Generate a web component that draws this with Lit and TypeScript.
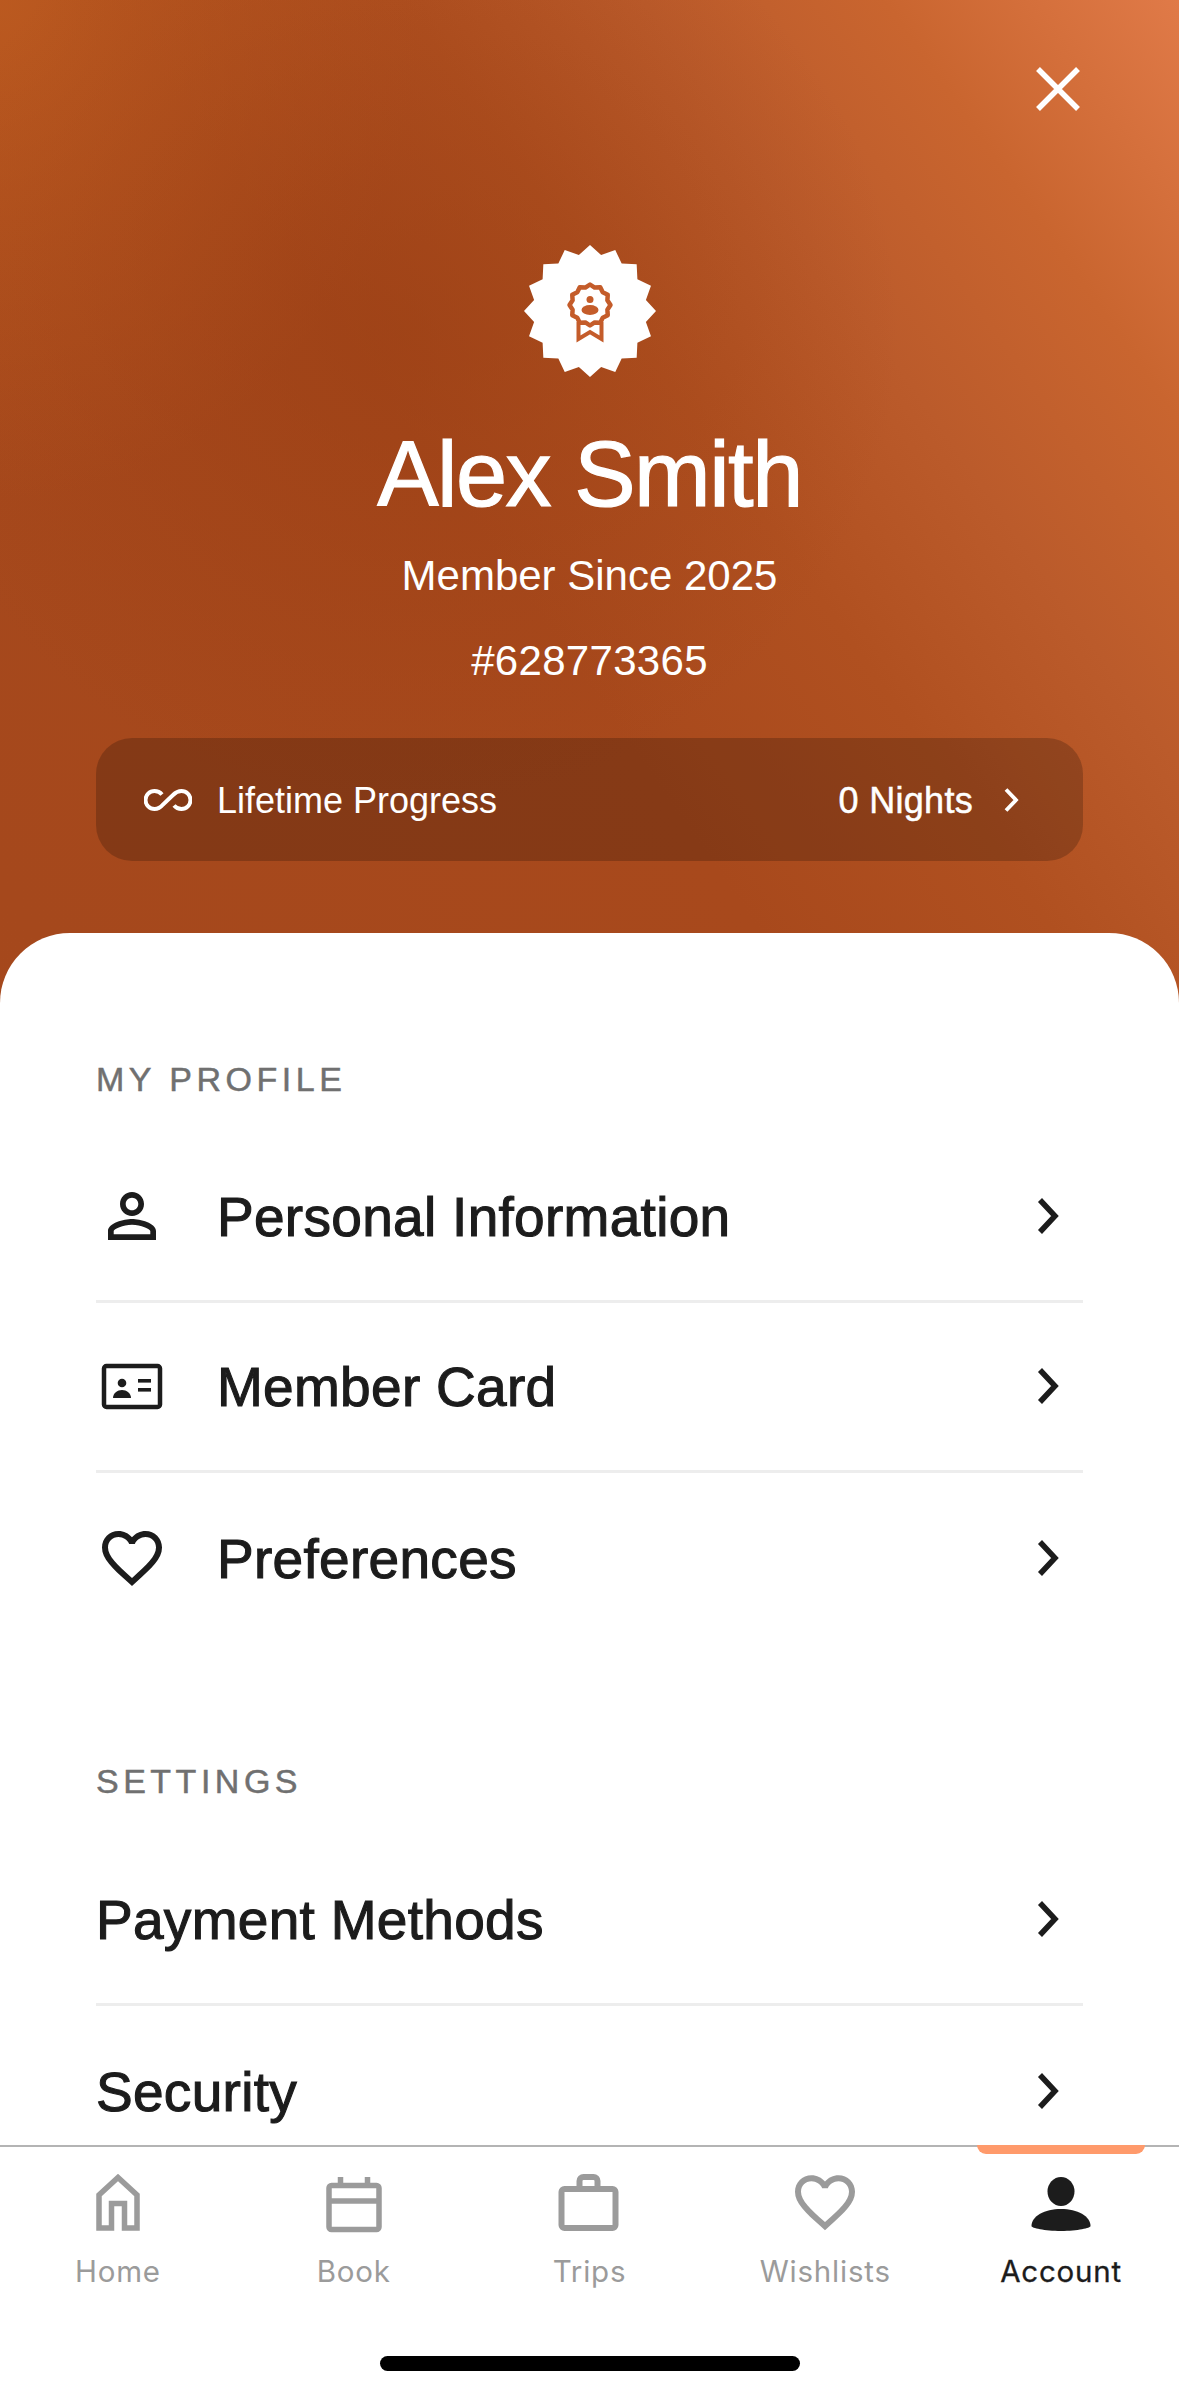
import { LitElement, html, css, svg } from 'lit';
import { customElement } from 'lit/decorators.js';

const starPoints = (cx: number, cy: number, outer: number, inner: number, n: number) => {
  const pts: string[] = [];
  for (let i = 0; i < n * 2; i++) {
    const r = i % 2 === 0 ? outer : inner;
    const a = (Math.PI * i) / n - Math.PI / 2;
    pts.push(`${(cx + r * Math.cos(a)).toFixed(2)},${(cy + r * Math.sin(a)).toFixed(2)}`);
  }
  return pts.join(' ');
};

const chevron = svg`<path d="M3 3l15 16L3 35" fill="none" stroke="currentColor" stroke-width="5.5"/>`;

const personOutline = svg`<path fill="currentColor" d="M12 5.9c1.16 0 2.1.94 2.1 2.1s-.94 2.1-2.1 2.1S9.9 9.16 9.9 8s.94-2.1 2.1-2.1m0 9c2.97 0 6.1 1.46 6.1 2.1v1.1H5.9V17c0-.64 3.13-2.1 6.1-2.1M12 4C9.79 4 8 5.79 8 8s1.79 4 4 4 4-1.79 4-4-1.79-4-4-4zm0 9c-2.67 0-8 1.34-8 4v3h16v-3c0-2.66-5.33-4-8-4z"/>`;

const heartOutline = svg`<path fill="currentColor" d="M16.5 3c-1.74 0-3.41.81-4.5 2.09C10.91 3.81 9.24 3 7.5 3 4.42 3 2 5.42 2 8.5c0 3.78 3.4 6.86 8.55 11.54L12 21.35l1.45-1.32C18.6 15.36 22 12.28 22 8.5 22 5.42 19.58 3 16.5 3zm-4.4 15.55l-.1.1-.1-.1C7.14 14.24 4 11.39 4 8.5 4 6.5 5.5 5 7.5 5c1.54 0 3.04.99 3.57 2.36h1.87C13.46 5.99 14.96 5 16.5 5c2 0 3.5 1.5 3.5 3.5 0 2.89-3.14 5.74-7.9 10.05z"/>`;

const cardIcon = svg`
  <rect x="8" y="16" width="56" height="41" rx="2.5" fill="none" stroke="currentColor" stroke-width="4.5"/>
  <circle cx="26" cy="33" r="4.3" fill="currentColor"/>
  <path d="M17 48c0-5 4.5-8 9-8s9 3 9 8z" fill="currentColor"/>
  <rect x="42" y="29" width="13" height="3.6" fill="currentColor"/>
  <rect x="42" y="38" width="13" height="3.6" fill="currentColor"/>`;

const homeIcon = svg`<path d="M26.5 54V29.5H39.5V54H52V21L33 3.500 14 21V54z" fill="none" stroke="currentColor" stroke-width="5.500"/>`;

const calendarIcon = svg`
  <rect x="8" y="11.500" width="50" height="44" rx="2.500" fill="none" stroke="currentColor" stroke-width="5.500"/>
  <path d="M8 27H58" stroke="currentColor" stroke-width="5.500"/>
  <path d="M19.500 3V12M46.500 3V12" stroke="currentColor" stroke-width="5.500"/>`;

const briefcaseIcon = svg`
  <rect x="5.500" y="15" width="54" height="39" rx="3" fill="none" stroke="currentColor" stroke-width="6"/>
  <path d="M23.500 15V7a4 4 0 0 1 4-4h10a4 4 0 0 1 4 4v8" fill="none" stroke="currentColor" stroke-width="6"/>`;

const personFilled = svg`
  <ellipse cx="33" cy="17.500" rx="13.500" ry="14.500" fill="currentColor"/>
  <path d="M3.500 52c0-10 13-17 29.500-17s29.500 7 29.500 17c0 2-13 5-29.500 5S3.500 54 3.500 52z" fill="currentColor"/>`;

interface Row {
  label: string;
  icon?: unknown;
  viewBox?: string;
}

const profileRows: Row[] = [
  { label: 'Personal Information', icon: personOutline, viewBox: '0 0 24 24' },
  { label: 'Member Card', icon: cardIcon, viewBox: '0 0 72 72' },
  { label: 'Preferences', icon: heartOutline, viewBox: '0 0 24 24' },
];

const settingsRows: Row[] = [{ label: 'Payment Methods' }, { label: 'Security' }];

const tabs = [
  { label: 'Home', icon: homeIcon },
  { label: 'Book', icon: calendarIcon },
  { label: 'Trips', icon: briefcaseIcon },
  { label: 'Wishlists', icon: heartOutline, viewBox: '1 2.6 22 20' },
  { label: 'Account', icon: personFilled, active: true },
];

@customElement('app-root')
export class AppRoot extends LitElement {
  static styles = css`
    :host {
      display: flex;
      flex-direction: column;
      width: 1179px;
      height: 2396px;
      overflow: hidden;
      background: #fff;
      font-family: 'Liberation Sans', Arial, sans-serif;
      color: #1c1c1c;
    }

    .main {
      flex: 1;
      min-height: 0;
      overflow: hidden;
      display: flex;
      flex-direction: column;
      background:
        radial-gradient(ellipse 500px 480px at 400px 330px, rgba(150, 60, 18, 0.5), rgba(150, 60, 18, 0) 100%),
        radial-gradient(ellipse 420px 500px at 0 0, rgba(190, 92, 32, 0.85), rgba(190, 92, 32, 0) 100%),
        linear-gradient(235deg, #e07a48 0%, #c9652f 11%, #bb5b2b 20%, #b05020 29%, #a8491c 40%, #a5481c 67%, #a9491d 100%);
    }

    .hero {
      display: flex;
      flex-direction: column;
      align-items: center;
      color: #fff;
      padding: 0 96px;
    }

    .close-row {
      align-self: stretch;
      display: flex;
      justify-content: flex-end;
      padding: 66px 0 0;
      margin-right: 2px;
      height: 46px;
    }

    .close {
      width: 46px;
      height: 46px;
    }

    .badge {
      display: block;
      width: 134px;
      height: 134px;
      margin-top: 132px;
    }

    .name {
      font-size: 92px;
      line-height: 100px;
      margin-top: 46px;
      -webkit-text-stroke: 1.2px #fff;
      letter-spacing: -1.5px;
    }

    .since,
    .number {
      font-size: 42px;
      line-height: 44px;
    }

    .since {
      margin-top: 30px;
    }

    .number {
      margin-top: 41px;
      letter-spacing: 0.3px;
    }

    .progress {
      align-self: stretch;
      display: flex;
      align-items: center;
      height: 123px;
      margin-top: 55px;
      padding: 0 48px;
      border-radius: 36px;
      background: rgba(0, 0, 0, 0.2);
      font-size: 36px;
    }

    .progress span {
      padding-top: 3px;
    }

    .progress .inf {
      width: 48px;
      height: 24px;
      margin-right: 25px;
    }

    .progress .nights {
      margin-left: auto;
      letter-spacing: 0.3px;
      -webkit-text-stroke: 0.5px #fff;
    }

    .progress .chev {
      width: 16px;
      height: 26px;
      margin-left: 30px;
      margin-right: 16px;
    }

    .sheet {
      flex: 1;
      margin-top: 72px;
      padding: 124px 96px 0;
      background: #fff;
      border-radius: 70px 70px 0 0;
    }

    .section {
      font-size: 34px;
      line-height: 44px;
      letter-spacing: 4.5px;
      color: #707070;
      -webkit-text-stroke: 0.5px #707070;
    }

    .list {
      margin-top: 31px;
    }

    .list.settings {
      margin-top: 33px;
    }

    .list + .section {
      margin-top: 115px;
    }

    .row {
      display: flex;
      align-items: center;
      height: 170.5px;
      box-sizing: border-box;
      border-bottom: 3px solid #ededed;
      font-size: 55px;
      letter-spacing: 0.3px;
      -webkit-text-stroke: 1.1px #1c1c1c;
    }

    .row span {
      padding-top: 2px;
    }

    .row:last-child {
      border-bottom: none;
    }

    .row .icon {
      width: 72px;
      height: 72px;
      margin-right: 49px;
    }

    .row .chev {
      width: 22px;
      height: 38px;
      margin-left: auto;
      margin-right: 24px;
    }

    .tabbar {
      position: relative;
      flex: none;
      height: 251px;
      box-sizing: border-box;
      border-top: 2px solid #b4b4b4;
      background: #fff;
      display: flex;
      flex-direction: column;
      align-items: center;
    }

    .tabs {
      align-self: stretch;
      display: grid;
      grid-template-columns: repeat(5, 1fr);
      padding-top: 27px;
    }

    .tab {
      position: relative;
      display: flex;
      flex-direction: column;
      align-items: center;
      color: #9b9b9b;
      font-family: Inter, sans-serif;
      font-size: 29.5px;
      line-height: 36px;
      letter-spacing: 0.8px;
    }

    .tab svg {
      width: 66px;
      height: 60px;
      margin-bottom: 19px;
    }

    .tab.active {
      color: #1c1c1c;
      -webkit-text-stroke: 0.3px #1c1c1c;
    }

    .tab.active::before {
      content: '';
      position: absolute;
      top: -29px;
      left: 34px;
      right: 34px;
      height: 9px;
      background: #ff9a6b;
      border-radius: 0 0 9px 9px;
    }

    .indicator {
      width: 420px;
      height: 15px;
      margin-top: auto;
      margin-bottom: 25px;
      border-radius: 8px;
      background: #000;
    }
  `;

  private renderRow(row: Row) {
    return html`
      <div class="row">
        ${row.icon ? html`<svg class="icon" viewBox=${row.viewBox ?? '0 0 24 24'}>${row.icon}</svg>` : ''}
        <span>${row.label}</span>
        <svg class="chev" viewBox="0 0 22 38">${chevron}</svg>
      </div>
    `;
  }

  render() {
    return html`
      <div class="main">
        <div class="hero">
          <div class="close-row">
            <svg class="close" viewBox="0 0 46 46">
              <path d="M3 3L43 43M43 3L3 43" stroke="#fff" stroke-width="5.500" fill="none" />
            </svg>
          </div>
          <svg class="badge" viewBox="0 0 134 134">
            <polygon points=${starPoints(67, 67, 66, 57, 16)} fill="#fff" />
            <polygon
              points=${starPoints(67, 61, 20.5, 18, 12)}
              fill="none"
              stroke="#c45c2a"
              stroke-width="4.500"
              stroke-linejoin="round"
            />
            <circle cx="67" cy="55.500" r="3.500" fill="#c45c2a" />
            <ellipse cx="67" cy="66" rx="8.500" ry="5" fill="#c45c2a" />
            <path d="M55.500 78V95L67 88L78.500 95V78" fill="none" stroke="#c45c2a" stroke-width="4" />
          </svg>
          <div class="name">Alex Smith</div>
          <div class="since">Member Since 2025</div>
          <div class="number">#628773365</div>
          <div class="progress">
            <svg class="inf" viewBox="0 0 48 24">
              <path
                d="M18 6.500C15.500 3.500 13 3 10.500 3a9 9 0 0 0 0 18c3.500 0 6-1.500 8.500-4.500l10-9.500C31.500 4.500 34 3 37.500 3a9 9 0 0 1 0 18c-2.500 0-5-.5-7.500-3.500"
                fill="none"
                stroke="#fff"
                stroke-width="4"
              />
            </svg>
            <span>Lifetime Progress</span>
            <span class="nights">0 Nights</span>
            <svg class="chev" viewBox="0 0 16 26">
              <path d="M3 2.500l10 10.500L3 23.500" fill="none" stroke="#fff" stroke-width="3.800" />
            </svg>
          </div>
        </div>
        <div class="sheet">
          <div class="section">MY PROFILE</div>
          <div class="list">${profileRows.map((r) => this.renderRow(r))}</div>
          <div class="section">SETTINGS</div>
          <div class="list settings">${settingsRows.map((r) => this.renderRow(r))}</div>
        </div>
      </div>
      <div class="tabbar">
        <div class="tabs">
          ${tabs.map(
            (t) => html`
              <div class="tab ${t.active ? 'active' : ''}">
                <svg viewBox=${t.viewBox ?? '0 0 66 60'}>${t.icon}</svg>
                <span>${t.label}</span>
              </div>
            `,
          )}
        </div>
        <div class="indicator"></div>
      </div>
    `;
  }
}

declare global {
  interface HTMLElementTagNameMap {
    'app-root': AppRoot;
  }
}
